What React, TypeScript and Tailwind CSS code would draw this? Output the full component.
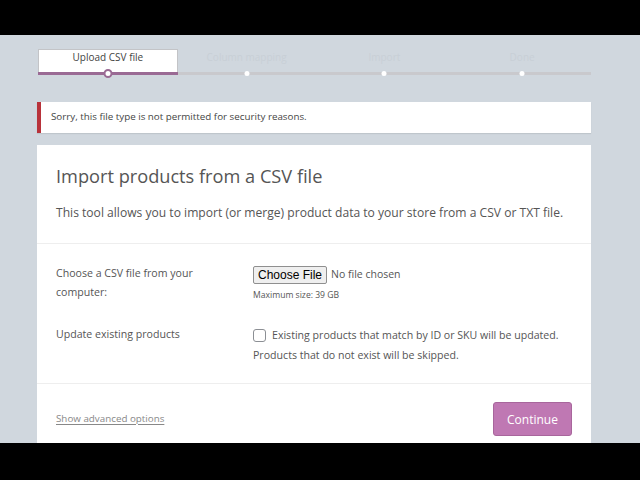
const steps = ["Upload CSV file", "Column mapping", "Import", "Done"];

function Stepper() {
  return (
    <ol className="flex w-full">
      {steps.map((label, i) => {
        const active = i === 0;
        return (
          <li
            key={label}
            className={
              active
                ? "relative flex h-[26px] flex-1 justify-center border border-b-0 border-[#c3c4c7] bg-white text-[10px] leading-[15px] text-[#444]"
                : "relative flex h-[26px] flex-1 justify-center pt-[1px] text-[10px] leading-[15px] text-[#c8cfd6]"
            }
          >
            <span>{label}</span>
            <span
              className={
                active
                  ? "absolute inset-x-[-1px] bottom-0 h-[3px] bg-[#9a6a94]"
                  : "absolute inset-x-0 bottom-0 h-[3px] bg-[#c9c9cd]"
              }
            />
            <span
              className={
                active
                  ? "absolute bottom-[-3px] left-1/2 h-[9px] w-[9px] -translate-x-1/2 rounded-full border-2 border-[#9a6a94] bg-white"
                  : "absolute bottom-[-1px] left-1/2 h-[5px] w-[5px] -translate-x-1/2 rounded-full bg-white"
              }
            />
          </li>
        );
      })}
    </ol>
  );
}

export default function App() {
  return (
    <div className="flex h-[480px] w-[640px] flex-col bg-black font-['Open_Sans',sans-serif]">
      <div className="h-[35px] shrink-0" />
      <main className="flex-1 overflow-hidden bg-[#d0d7de] pl-[37px] pr-[49px] pt-[14px]">
        <div className="pl-[1px]">
          <Stepper />
        </div>

        <div className="mt-[27px] flex h-[31px] items-center border-l-4 border-[#b8323a] bg-white pl-[10px] text-[9.8px] text-[#444] shadow-[0_1px_1px_rgba(0,0,0,0.08)]">
          Sorry, this file type is not permitted for security reasons.
        </div>

        <section className="mt-[12px] bg-white">
          <header className="border-b border-[#eee] px-[19px] pt-[17px] pb-[21px]">
            <h2 className="text-[18.2px] font-normal leading-[28px] text-[#555]">
              Import products from a CSV file
            </h2>
            <p className="mt-[14px] text-[12.1px] leading-[18px] text-[#555]">
              This tool allows you to import (or merge) product data to your store from a CSV or TXT file.
            </p>
          </header>

          <div className="px-[19px] pt-[20px] pb-[18px] text-[10.6px] leading-[19px] text-[#555]">
            <div className="flex">
              <div className="w-[197px] pr-[20px]">Choose a CSV file from your computer:</div>
              <div className="pt-[1px]">
                <div className="flex items-center gap-[4px]">
                  <span className="rounded-[2px] border border-[#8f8f8f] bg-[#efefef] px-[4px] font-['Liberation_Sans',sans-serif] text-[12px] leading-[16px] text-black">
                    Choose File
                  </span>
                  <span className="text-[10.5px] text-[#555]">No file chosen</span>
                </div>
                <div className="mt-[4px] text-[8.6px] leading-[14px] text-[#555]">Maximum size: 39 GB</div>
              </div>
            </div>

            <div className="mt-[23px] flex">
              <div className="w-[197px] pr-[20px]">Update existing products</div>
              <div>
                <label className="flex items-center gap-[6px] pt-[1px]">
                  <span className="h-[13px] w-[13px] rounded-[3px] border border-[#8c8f94] bg-white" />
                  <span>Existing products that match by ID or SKU will be updated.</span>
                </label>
                <div className="mt-[1px]">Products that do not exist will be skipped.</div>
              </div>
            </div>
          </div>

          <footer className="flex items-center justify-between border-t border-[#eee] px-[19px] pt-[18px] pb-[10px]">
            <a className="text-[9.8px] text-[#888] underline underline-offset-2">Show advanced options</a>
            <button className="h-[34px] w-[79px] rounded-[3px] border border-[#a8669c] bg-[#bf78b3] pt-[2px] text-[12px] text-white">
              Continue
            </button>
          </footer>
        </section>
      </main>
      <div className="h-[37px] shrink-0" />
    </div>
  );
}
